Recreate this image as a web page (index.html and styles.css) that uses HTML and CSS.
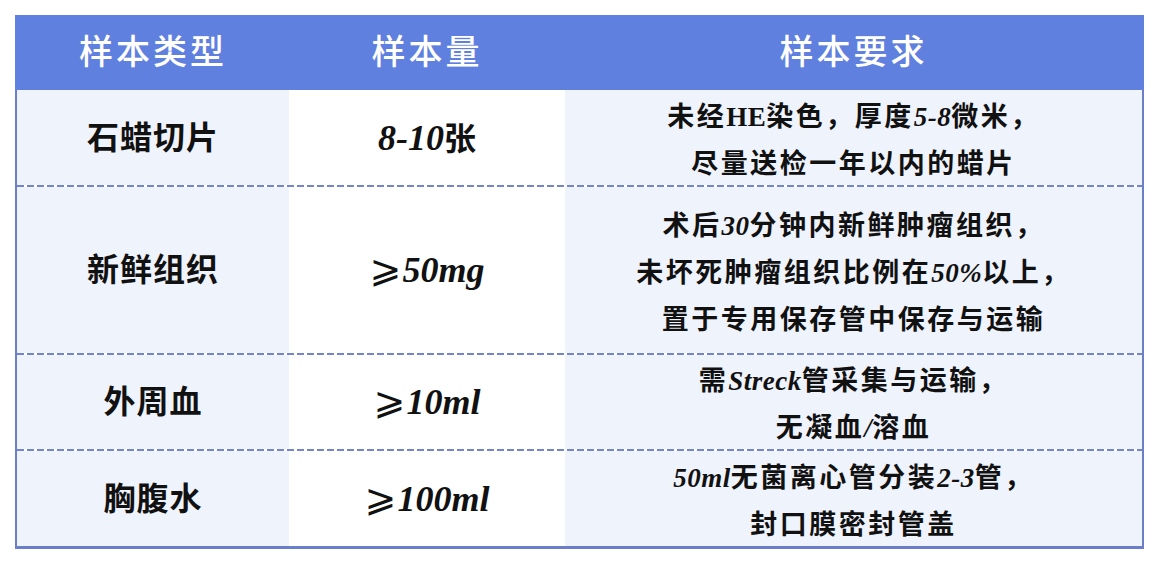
FILE: index.html
```html
<!DOCTYPE html>
<html lang="zh">
<head>
<meta charset="utf-8">
<link rel="stylesheet" href="styles.css">
</head>
<body>
<div class="table">
  <div class="row head">
    <div class="cell c1">样本类型</div>
    <div class="cell c2">样本量</div>
    <div class="cell c3">样本要求</div>
  </div>
  <div class="row r1">
    <div class="cell c1 name">石蜡切片</div>
    <div class="cell c2 amt"><span><span class="lat">8-10</span>张</span></div>
    <div class="cell c3 req">
      <p>未经<span class="up">HE</span>染色，厚度<span class="lat">5-8</span>微米，</p>
      <p>尽量送检一年以内的蜡片</p>
    </div>
  </div>
  <div class="sep"></div>
  <div class="row r2">
    <div class="cell c1 name">新鲜组织</div>
    <div class="cell c2 amt"><span><span class="ge">⩾</span><span class="lat">50mg</span></span></div>
    <div class="cell c3 req">
      <p>术后<span class="lat">30</span>分钟内新鲜肿瘤组织，</p>
      <p>未坏死肿瘤组织比例在<span class="lat">50%</span>以上，</p>
      <p>置于专用保存管中保存与运输</p>
    </div>
  </div>
  <div class="sep"></div>
  <div class="row r3">
    <div class="cell c1 name">外周血</div>
    <div class="cell c2 amt"><span><span class="ge">⩾</span><span class="lat">10ml</span></span></div>
    <div class="cell c3 req">
      <p>需<span class="lat">Streck</span>管采集与运输，</p>
      <p>无凝血<span class="lat">/</span>溶血</p>
    </div>
  </div>
  <div class="sep"></div>
  <div class="row r4">
    <div class="cell c1 name">胸腹水</div>
    <div class="cell c2 amt"><span><span class="ge">⩾</span><span class="lat">100ml</span></span></div>
    <div class="cell c3 req">
      <p><span class="lat">50ml</span>无菌离心管分装<span class="lat">2-3</span>管，</p>
      <p>封口膜密封管盖</p>
    </div>
  </div>
</div>
</body>
</html>
```

FILE: styles.css
```css
html, body {
  margin: 0;
  padding: 0;
  background: #ffffff;
}
body {
  padding: 15px 16px 0 15px;
  font-family: "Liberation Serif", "Noto Sans CJK SC", serif;
  color: #111111;
}
.table {
  width: 1129px;
  border-left: 2px solid #6b7ecb;
  border-right: 2px solid #6b7ecb;
  border-bottom: 3px solid #6b7ecb;
  box-sizing: border-box;
}
.row {
  display: grid;
  grid-template-columns: 272px 276px 1fr;
  grid-template-rows: minmax(0, 1fr);
}
.sep {
  height: 2px;
  background: repeating-linear-gradient(90deg, #7486c9 0 7px, #ffffff 7px 10px);
}
.r1 { height: 95px; }
.r2 { height: 166px; }
.r3 { height: 94px; }
.r4 { height: 95px; }
.cell {
  display: flex;
  flex-direction: column;
  align-items: center;
  justify-content: center;
  text-align: center;
  font-family: "Noto Sans CJK SC", sans-serif;
  min-height: 0;
}
.head {
  height: 75px;
  background: #6080e0;
  margin: 0 -2px;
  padding: 0 2px;
}
.head .cell {
  color: #ffffff;
  font-size: 34px;
  letter-spacing: 3px;
  font-weight: 500;
  padding-bottom: 6px;
}
.row:not(.head) .c1,
.row:not(.head) .c3 {
  background-color: #eff3fc;
}
.name {
  font-size: 32px;
  font-weight: 700;
  letter-spacing: 1px;
  padding-bottom: 6px;
}
.amt {
  font-size: 32px;
  font-weight: 700;
  padding-bottom: 4px;
}
.lat {
  font-family: "Liberation Serif", serif;
  font-style: italic;
  font-weight: 700;
  line-height: 1;
}
.amt .lat {
  font-size: 36px;
}
.req .lat {
  letter-spacing: 0.5px;
}
.up {
  font-family: "Liberation Serif", serif;
  font-weight: 700;
  letter-spacing: 0.5px;
  line-height: 1;
}
.ge {
  font-family: "DejaVu Sans", serif;
  font-weight: 400;
  font-size: 38px;
  line-height: 1;
  margin-right: 1px;
}
.req {
  font-size: 27px;
  font-weight: 700;
  letter-spacing: 2.5px;
}
.req p {
  margin: 0;
  line-height: 47px;
}
```
